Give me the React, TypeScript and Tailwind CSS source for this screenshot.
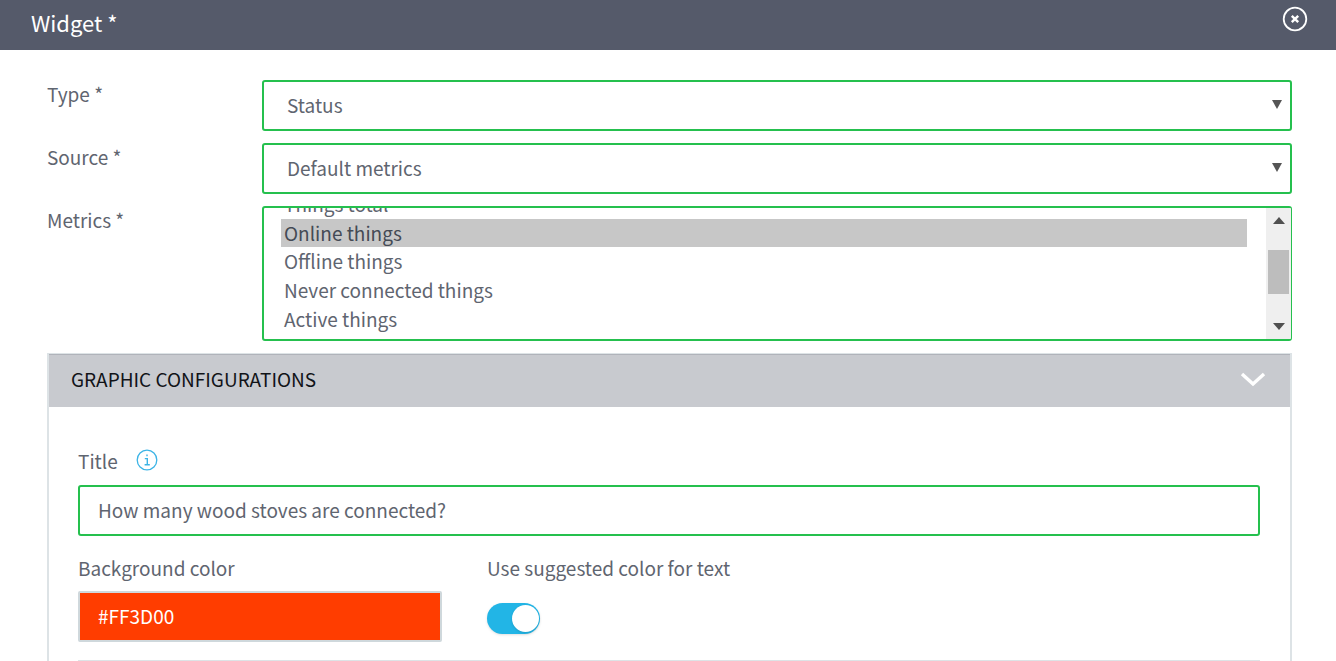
const font = { fontFamily: '"Noto Sans CJK SC", "Noto Sans", sans-serif' };

const options = ["Things total", "Online things", "Offline things", "Never connected things", "Active things"];

const FormRow = ({ label, children }: any) => (
  <div className="flex">
    <label className="w-[215px] shrink-0 pt-[2px] text-[19px] leading-[24px] text-[#5f6570]">{label}</label>
    <div className="flex-1">{children}</div>
  </div>
);

const SelectBox = ({ value }: any) => (
  <div className="flex h-[51px] items-center justify-between rounded-[3px] border-2 border-[#25c04e] pl-[23px] pr-[8px]">
    <span className="mb-[2px] text-[19px] leading-[24px] text-[#5f6570]">{value}</span>
    <svg width="10" height="10" viewBox="0 0 10 10" className="mb-[3px]">
      <path d="M0 1h10L5 10z" fill="#555" />
    </svg>
  </div>
);

export default function App() {
  return (
    <div className="h-[661px] w-[1336px] overflow-hidden bg-white" style={font}>
      <div className="flex h-[50px] items-start justify-between bg-[#555a6a] pl-[31px] pr-[28px]">
        <h1 className="pt-[7px] text-[22px] leading-[30px] font-normal text-white">Widget *</h1>
        <button className="mt-[6px] text-white">
          <svg width="26" height="26" viewBox="0 0 26 26" fill="none" stroke="currentColor">
            <circle cx="13" cy="13" r="11.3" strokeWidth="1.8" />
            <path d="M9.8 9.8l6.4 6.4M16.2 9.8l-6.4 6.4" strokeWidth="2.4" />
          </svg>
        </button>
      </div>

      <div className="flex flex-col gap-[12px] pt-[30px] pl-[47px] pr-[44px]">
        <FormRow label="Type *">
          <SelectBox value="Status" />
        </FormRow>
        <FormRow label="Source *">
          <SelectBox value="Default metrics" />
        </FormRow>
        <FormRow label="Metrics *">
          <div className="flex h-[135px] overflow-hidden rounded-[3px] border-y-2 border-r border-l-2 border-[#25c04e]">
            <ul className="mt-[-18px] flex-1 pl-[17px] pr-[19px]">
              {options.map((o, idx) => (
                <li
                  key={o}
                  className={`h-[28.7px] pl-[3px] text-[19px] leading-[27.7px] ${idx === 1 ? "bg-[#c7c7c7] text-[#444a55]" : "text-[#5f6570]"}`}
                >
                  {o}
                </li>
              ))}
            </ul>
            <div className="flex w-[25px] flex-col items-center bg-[#efefef] pt-[9px]">
              <svg width="12" height="7" viewBox="0 0 12 7">
                <path d="M6 0l6 7H0z" fill="#505050" />
              </svg>
              <div className="mt-[26px] h-[44px] w-[21px] bg-[#bdbdbd]" />
              <svg width="12" height="7" viewBox="0 0 12 7" className="mt-[29px]">
                <path d="M0 0h12L6 7z" fill="#505050" />
              </svg>
            </div>
          </div>
        </FormRow>

        <section className="border-x-2 border-t border-[#dde3e6]">
          <div className="flex h-[53px] items-center justify-between border-t border-[#b0b3ba] bg-[#c8cacf] pb-[4px] pl-[22px] pr-[24px]">
            <span className="text-[19px] leading-[24px] text-[#111318]">GRAPHIC CONFIGURATIONS</span>
            <svg width="26" height="16" viewBox="0 0 26 16" fill="none" stroke="#ffffff" strokeWidth="3.4">
              <path d="M2 3l11 10L24 3" />
            </svg>
          </div>
          <div className="pl-[29px] pr-[30px] pt-[41px]">
            <div className="flex h-[26px] items-center gap-[18px]">
              <span className="text-[19px] leading-[24px] text-[#5f6570]">Title</span>
              <svg width="22" height="22" viewBox="0 0 22 22" fill="none" stroke="#3cb4e6" className="mb-[3px]">
                <circle cx="11" cy="11" r="9.8" strokeWidth="1.3" />
                <path d="M11 5.5v1.8M8.8 9.6H11.3v6M8.6 15.8h5.2" strokeWidth="1.4" />
              </svg>
            </div>
            <div className="mt-[11px] flex h-[51px] items-center rounded-[3px] border-2 border-[#25c04e] pb-[2px] pl-[18px] text-[19px] leading-[24px] text-[#5f6570]">
              How many wood stoves are connected?
            </div>
            <div className="mt-[20px] flex">
              <div className="w-[409px]">
                <div className="text-[19px] leading-[24px] text-[#5f6570]">Background color</div>
                <div className="mt-[11px] flex h-[51px] w-[364px] items-center rounded-[2px] border-2 border-[#cfd8dc] bg-[#ff3d00] pb-[2px] pl-[18px] text-[19px] leading-[24px] text-white">
                  #FF3D00
                </div>
              </div>
              <div>
                <div className="text-[19px] leading-[24px] text-[#5f6570]">Use suggested color for text</div>
                <div className="mt-[23px] flex h-[31px] w-[53px] items-center justify-end rounded-full bg-[#22b5e6] pr-[1px] shadow-sm">
                  <div className="h-[27px] w-[27px] rounded-full bg-white shadow-sm" />
                </div>
              </div>
            </div>
            <div className="mt-[18px] border-t border-[#dde3e6]" />
          </div>
        </section>
      </div>
    </div>
  );
}
